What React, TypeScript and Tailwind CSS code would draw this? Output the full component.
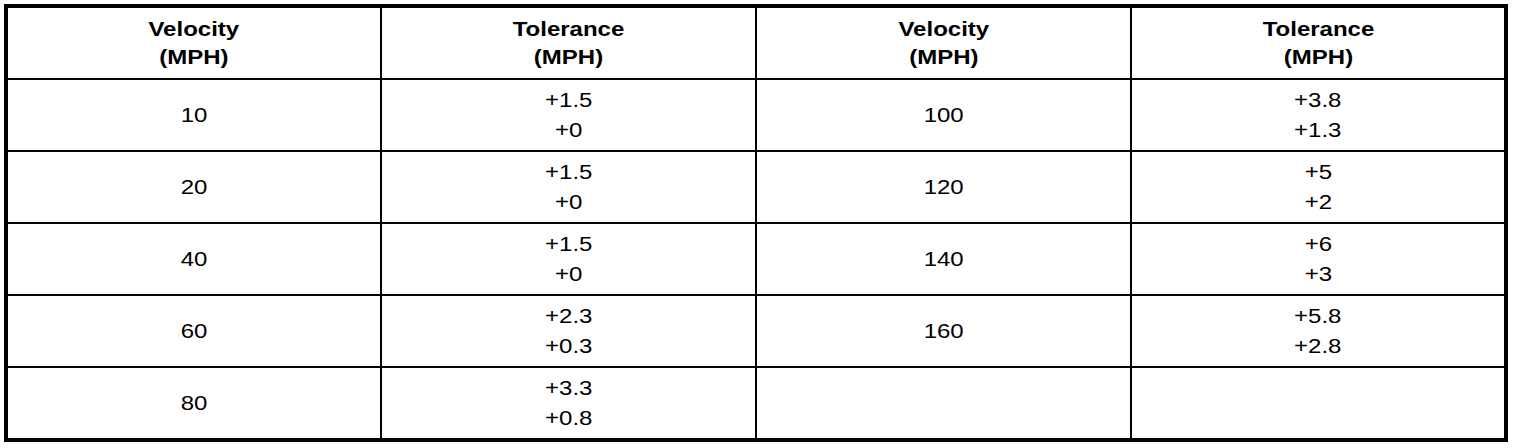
import React from "react";

const rows: [string, string[], string, string[]][] = [
  ["10", ["+1.5", "+0"], "100", ["+3.8", "+1.3"]],
  ["20", ["+1.5", "+0"], "120", ["+5", "+2"]],
  ["40", ["+1.5", "+0"], "140", ["+6", "+3"]],
  ["60", ["+2.3", "+0.3"], "160", ["+5.8", "+2.8"]],
  ["80", ["+3.3", "+0.8"], "", []],
];

function Head({ a, b }: { a: string; b: string }) {
  return (
    <div className="bg-white flex items-center justify-center">
      <div className="scale-x-[1.2] text-center font-bold text-[20px] leading-[28px]">
        <div>{a}</div>
        <div>{b}</div>
      </div>
    </div>
  );
}

function Cell({ lines }: { lines: string[] }) {
  return (
    <div className="bg-white flex items-center justify-center">
      <div className="scale-x-[1.2] text-center text-[20px] leading-[30px]">
        {lines.map((l, i) => (
          <div key={i}>{l}</div>
        ))}
      </div>
    </div>
  );
}

export default function App() {
  return (
    <div
      className="w-[1520px] h-[448px] bg-white p-1 text-black"
      style={{ fontFamily: '"Liberation Sans", Arial, sans-serif' }}
    >
      <div className="w-[1504px] h-[438px] border-4 border-black bg-black">
        <div className="grid grid-cols-[372px_373px_373px_372px] grid-rows-[repeat(6,70px)] gap-[2px]">
          <Head a="Velocity" b="(MPH)" />
          <Head a="Tolerance" b="(MPH)" />
          <Head a="Velocity" b="(MPH)" />
          <Head a="Tolerance" b="(MPH)" />
          {rows.map((r, i) => (
            <React.Fragment key={i}>
              <Cell lines={r[0] ? [r[0]] : []} />
              <Cell lines={r[1]} />
              <Cell lines={r[2] ? [r[2]] : []} />
              <Cell lines={r[3]} />
            </React.Fragment>
          ))}
        </div>
      </div>
    </div>
  );
}
